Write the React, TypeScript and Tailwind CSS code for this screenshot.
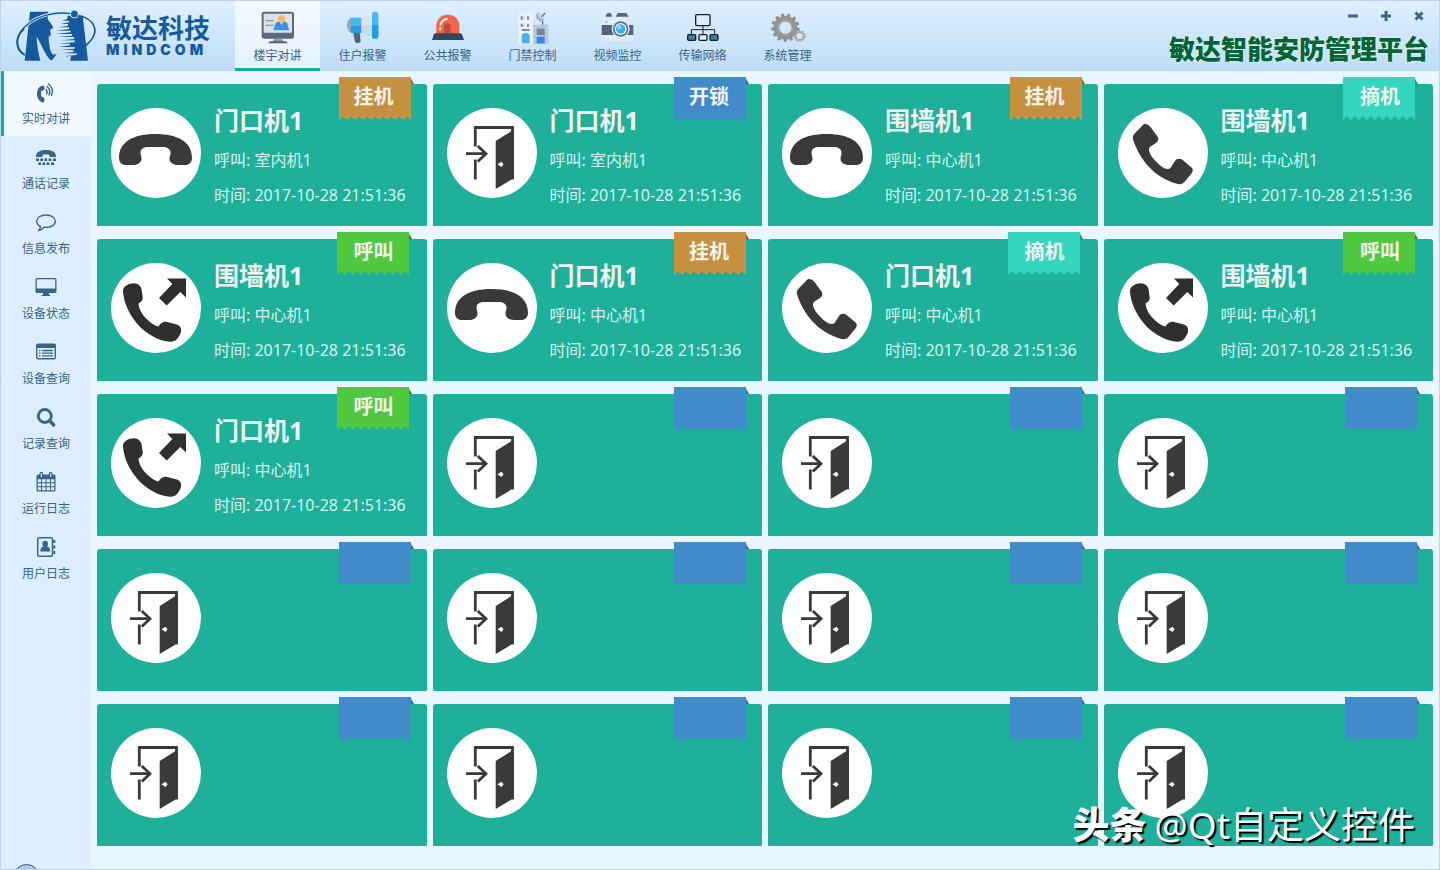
import type { ReactNode } from "react";

type Status = "hangup" | "unlock" | "answer" | "call";

interface Device {
  name?: string;
  peer?: string;
  status: Status;
}

const TIME = "2017-10-28 21:51:36";

const ribbons: Record<Status, { label: string; color: string; fold: string; edge: string; place: string; text: string }> = {
  hangup: { label: "挂机", color: "#c5903f", fold: "#8f6426", edge: "#d9903f", place: "right-[13px]", text: "w-[70px]" },
  unlock: { label: "开锁", color: "#428bca", fold: "#2c6798", edge: "#428bca", place: "right-[13px]", text: "w-[70px]" },
  answer: { label: "摘机", color: "#34d6bf", fold: "#179482", edge: "#34d6bf", place: "right-[15px]", text: "w-[74px]" },
  call: { label: "呼叫", color: "#50c941", fold: "#2b7a52", edge: "#50c941", place: "right-[15px]", text: "w-[74px]" },
};

const devices: Device[] = [
  { name: "门口机1", peer: "室内机1", status: "hangup" },
  { name: "门口机1", peer: "室内机1", status: "unlock" },
  { name: "围墙机1", peer: "中心机1", status: "hangup" },
  { name: "围墙机1", peer: "中心机1", status: "answer" },
  { name: "围墙机1", peer: "中心机1", status: "call" },
  { name: "门口机1", peer: "中心机1", status: "hangup" },
  { name: "门口机1", peer: "中心机1", status: "answer" },
  { name: "围墙机1", peer: "中心机1", status: "call" },
  { name: "门口机1", peer: "中心机1", status: "call" },
  ...Array.from({ length: 11 }, (): Device => ({ status: "unlock" })),
];

const drawings: Record<Status, ReactNode> = {
  hangup: (
    <path
      fill="#3a3a3a"
      d="M8 50C8 34 22 26 44.500 26S81 34 81 50C81 54.500 78 57 74 57H67C62 57 58.500 54.500 58.500 50.500C58.500 48 60 46.500 59.500 44C58.800 40.500 56 39 52 39H37C33 39 30 40.500 29.500 44C29.200 46.500 30.500 48 30.500 50.500C30.500 54.500 27 57 22 57H15C11 57 8 54.500 8 50Z"
    />
  ),
  unlock: (
    <g>
      <path fill="none" stroke="#3a3a3a" strokeWidth="2.800" d="M28.300 38.500V19.500H65.500V71M28.300 51.500V71.500" />
      <path fill="#3a3a3a" d="M48.700 33L66.900 21.500V71.500H64.500L48.700 81Z" />
      <path fill="none" stroke="#3a3a3a" strokeWidth="2.800" d="M19 45.700H38.500M30.800 38L39 45.700L30.800 53.500" />
      <path fill="#fff" d="M50.500 56.300L54.500 53.800L56.500 56.300L54.500 59Z" />
    </g>
  ),
  answer: (
    <path
      fill="#3a3a3a"
      d="M27 16C29 16 31 17 32.500 19L39.800 29C41 31.500 40 33.700 38 35L32.500 38.500C29.500 41 31 46 37.500 53C44 60 49 62.500 52.500 60L57 53C58.500 50.500 61.500 50 64 51.500L73 59C75.300 61 75.300 63 73.500 65.500L66 74.500C64 76.500 61 76.500 58 75.500C36 69 22 52 15.200 32C14.300 29 15 27.500 17 25L24 18C25 16.500 26 16 27 16Z"
    />
  ),
  call: (
    <g fill="#2f2f2f">
      <path d="M19 20.800C25 19 29 21 30.500 26L31.700 34C32 37.500 30 39 27.500 40.500C28 48 33 54 39 59C42 61.500 45 63 47.500 63.500C49 61 51 58.500 55 58.700L66 61.500C70 63 71 67 69.500 70.500C67 75.500 64.500 79 59 78.700C45 77.500 31 68.500 22.500 56C16 46.500 12.500 37.500 12 28C12 24.500 15 22 19 20.800Z" />
      <path d="M56 15.500H75V34.500L69.300 29L55.700 42.500L48 35L61.300 21Z" />
    </g>
  ),
};

function Ribbon({ status, labelled }: { status: Status; labelled: boolean }) {
  const r = ribbons[status];
  return (
    <div className={`absolute -top-[7px] h-[43px] w-[75px] ${r.place}`}>
      <svg className="absolute inset-0" width="75" height="43" viewBox="0 0 75 43" aria-hidden="true">
        <path fill={r.fold} d="M71 0L75 7H71Z" />
        {status === "unlock" ? (
          <path fill={r.color} d="M0 0H72V42H0Z" />
        ) : (
          <g>
            <path
              fill={r.edge}
              d="M0 38H72V43L68 39L64 43L60 39L56 43L52 39L48 43L44 39L40 43L36 39L32 43L28 39L24 43L20 39L16 43L12 39L8 43L4 39L0 43Z"
            />
            <path fill={r.color} d="M0 0H72V39H0Z" />
          </g>
        )}
      </svg>
      {labelled && (
        <span className={`relative block pt-1 text-center text-[20px] leading-8 font-bold text-[#f3f4ee] ${r.text}`}>
          {r.label}
        </span>
      )}
    </div>
  );
}

function DeviceCard({ device }: { device: Device }) {
  return (
    <article className="relative flex h-[142px] items-start gap-[13px] rounded-t-[3px] rounded-b-[1px] bg-[#1eb09b] pt-5 pl-3.5">
      <div className="mt-1 size-[90px] shrink-0 rounded-full bg-white">
        <svg width="90" height="90" viewBox="0 0 90 90" aria-hidden="true">
          {drawings[device.status]}
        </svg>
      </div>
      {device.name && (
        <div className="whitespace-nowrap text-[#d5f5ee]">
          <h2 className="text-[25px] leading-8 font-bold text-[#f0f3ef]">{device.name}</h2>
          <p className="mt-3 text-base leading-6">呼叫: {device.peer}</p>
          <p className="mt-[11px] text-base leading-6">时间: {TIME}</p>
        </div>
      )}
      <Ribbon status={device.status} labelled={Boolean(device.name)} />
    </article>
  );
}

const tabs: { label: string; icon: ReactNode }[] = [
  {
    label: "楼宇对讲",
    icon: (
      <svg width="36" height="36" viewBox="780 28 108 108" aria-hidden="true">
        <rect x="785" y="36" width="97" height="81" rx="8" fill="#5b6877" />
        <rect x="791" y="42" width="85" height="57" rx="2" fill="#dde3ee" />
        <path d="M797 63H821M797 77H821" stroke="#8c95a4" strokeWidth="4" />
        <path d="M821 92V86C825 83 824 66 834 66H856C865 66 862 83 867 87V92Z" fill="#3b8fe6" />
        <path d="M838 64H851L845 76Z" fill="#f6f0e4" />
        <circle cx="845" cy="58" r="11" fill="#fbb85c" />
        <path d="M822 117H846L850 127H818Z" fill="#8b95a3" />
        <path d="M805 131Q806 125 813 125H855Q862 125 863 131Z" fill="#56616f" />
      </svg>
    ),
  },
  {
    label: "住户报警",
    icon: (
      <svg width="36" height="36" viewBox="75 24 108 108" aria-hidden="true">
        <path d="M93 50V96C77 88 77 57 93 50Z" fill="#9aa9ba" />
        <path d="M99 92H119L122 123Q111 130 105 123Z" fill="#51627a" />
        <path d="M124 50L157 39V107L124 96Z" fill="#dbe5ef" />
        <path d="M124 73H157V107L124 96Z" fill="#cbd8e6" />
        <path d="M93 50H124V73H93Z" fill="#43b5f5" />
        <path d="M93 73H124V96H93Z" fill="#249bdf" />
        <rect x="156" y="32" width="19" height="82" rx="9" fill="#46b8f8" />
        <path d="M156 73H175V105Q174 114 165 114T156 105Z" fill="#229bdf" />
      </svg>
    ),
  },
  {
    label: "公共报警",
    icon: (
      <svg width="36" height="36" viewBox="329 24 108 108" aria-hidden="true">
        <path d="M348 100V76C348 54 362 41 382 41S417 54 417 76V100Z" fill="#f2654a" />
        <path d="M371 97V76Q371 67 380 67T391 76V97Z" fill="#bd4c3b" />
        <path d="M360 88V78C360 64 367 55 382 53" fill="none" stroke="#fff0dc" strokeWidth="6" strokeDasharray="9 5 40" />
        <path d="M344 97H420Q425 97 427 105L431 117H335L339 105Q340 97 344 97Z" fill="#34465a" />
      </svg>
    ),
  },
  {
    label: "门禁控制",
    icon: (
      <svg width="36" height="36" viewBox="583 24 108 108" aria-hidden="true">
        <path d="M593 43Q615 24 637 43V129H593Z" fill="#edf3fd" />
        <path d="M637 71H683V129H637Z" fill="#b9c8de" />
        <path d="M603 46V56M603 68V77M622 46V56M622 68V77" stroke="#65768b" strokeWidth="5" />
        <path d="M610 46V56M610 68V77" stroke="#c8d1dd" strokeWidth="4" />
        <path d="M603 87H627" stroke="#65768b" strokeWidth="5" />
        <path d="M603 127V106Q603 96 615 96T627 106V127Z" fill="#46aff5" />
        <path d="M648 83H672V102H648Z" fill="#75859b" />
        <path d="M648 107H672V127H648Z" fill="#3186e8" />
        <ellipse cx="658" cy="49" rx="10" ry="14" fill="#a9b6c6" transform="rotate(-40 658 49)" />
        <ellipse cx="662" cy="45" rx="6" ry="10" fill="#d5deea" transform="rotate(-40 662 45)" />
        <path d="M662 47L674 36M666 60V71" stroke="#64748a" strokeWidth="4" />
      </svg>
    ),
  },
  {
    label: "视频监控",
    icon: (
      <svg width="36" height="36" viewBox="90 20 108 108" aria-hidden="true">
        <rect x="95" y="43" width="95" height="73" rx="9" fill="#dfeafa" />
        <path d="M107 43Q109 31 117 31T126 43ZM137 43L143 32H169L176 43Z" fill="#56687f" />
        <path d="M95 68H190V98H95Z" fill="#53657b" />
        <circle cx="109" cy="59" r="3" fill="#8bc34a" />
        <circle cx="152" cy="80" r="27" fill="#e3eaf4" />
        <circle cx="152" cy="80" r="23" fill="#5e6d80" />
        <circle cx="152" cy="80" r="18" fill="#e9f5fc" />
        <circle cx="152" cy="80" r="14" fill="#35b1f2" />
        <circle cx="148" cy="75" r="6" fill="#8dd8fc" />
      </svg>
    ),
  },
  {
    label: "传输网络",
    icon: (
      <svg width="36" height="36" viewBox="344 24 108 108" aria-hidden="true">
        <path d="M398 74V100M363 100V86H433V100" fill="none" stroke="#17212b" strokeWidth="3" />
        <g stroke="#17212b" strokeWidth="4">
          <rect x="376" y="41" width="43" height="33" rx="4" fill="#dceefd" />
          <rect x="352" y="101" width="24" height="17" rx="3" fill="#3281a2" />
          <rect x="386" y="101" width="24" height="17" rx="3" fill="#dceefd" />
          <rect x="419" y="101" width="24" height="17" rx="3" fill="#3281a2" />
        </g>
      </svg>
    ),
  },
  {
    label: "系统管理",
    icon: (
      <svg width="36" height="36" viewBox="598 24 108 108" aria-hidden="true">
        <circle cx="644" cy="80" r="27" fill="none" stroke="#969696" strokeWidth="18" />
        <circle cx="644" cy="80" r="38" fill="none" stroke="#8d8d8d" strokeWidth="9" strokeDasharray="9 9.370" />
        <circle cx="644" cy="80" r="20" fill="none" stroke="#b9b9b9" strokeWidth="3" />
        <circle cx="687" cy="105" r="12" fill="#d5e6f5" stroke="#ababab" strokeWidth="6" />
        <circle cx="687" cy="105" r="16" fill="none" stroke="#9b9b9b" strokeWidth="4" strokeDasharray="5 5.050" />
      </svg>
    ),
  },
];

const sideItems: { label: string; icon: ReactNode }[] = [
  {
    label: "实时对讲",
    icon: (
      <g>
        <path d="M8.500 4.500C4 5 2 8.500 2 12.500S4 21 8.500 21.800L9.800 18L7.800 15.700L6.600 16C5.800 14 5.800 11.500 6.600 9.500L8 9.800L9.800 7.500Z" fill="currentColor" />
        <path d="M11 8.500Q13 10.500 11.500 13M12 5.500Q16.300 9 14 14M13.500 3Q19.500 8 16.500 14.500" fill="none" stroke="currentColor" strokeWidth="1.400" strokeLinecap="round" />
      </g>
    ),
  },
  {
    label: "通话记录",
    icon: (
      <g fill="currentColor">
        <path d="M1 11C1 6 4.500 4 11 4S21 6 21 11H14.500V8.800Q11 7.800 7.500 8.800V11Z" />
        <path d="M1 12.500H4V15H1ZM5.200 12.500H8V15H5.200ZM9.400 12.500H12.200V15H9.400ZM13.600 12.500H16.400V15H13.600ZM18 12.500H21V15H18ZM3.200 16.500H6V19H3.200ZM7.400 16.500H10.200V19H7.400ZM11.600 16.500H14.400V19H11.600ZM16 16.500H19V19H16Z" />
      </g>
    ),
  },
  {
    label: "信息发布",
    icon: (
      <path d="M11 4C5.500 4 1.700 6.600 1.700 10.200C1.700 12.700 3.500 14.500 5.500 15.500C5.300 17.500 4.500 18.500 3.500 19.500C6 19 7.800 17.700 9 16.300C16 17 20.300 14 20.300 10.200C20.300 6.600 16.500 4 11 4Z" fill="none" stroke="currentColor" strokeWidth="1.400" strokeLinejoin="round" />
    ),
  },
  {
    label: "设备状态",
    icon: (
      <path fillRule="evenodd" d="M2 2H20Q21.500 2 21.500 3.500V15.500Q21.500 17 20 17H14V18.500L16 20H6L8 18.500V17H2Q.5 17 .5 15.500V3.500Q.5 2 2 2ZM1.800 3.300V12.500H20.200V3.300Z" fill="currentColor" />
    ),
  },
  {
    label: "设备查询",
    icon: (
      <g>
        <rect x="1.700" y="3.200" width="18.600" height="14.600" rx="1.500" fill="none" stroke="currentColor" strokeWidth="1.400" />
        <path d="M1.500 3H20.500V7H1.500Z" fill="currentColor" />
        <path d="M4 9.500H5.500M7 9.500H18M4 12.200H5.500M7 12.200H18M4 14.900H5.500M7 14.900H18" stroke="currentColor" strokeWidth="1.300" />
      </g>
    ),
  },
  {
    label: "记录查询",
    icon: (
      <g fill="none" stroke="currentColor">
        <circle cx="9.800" cy="10" r="6.500" strokeWidth="2.800" />
        <path d="M14.500 14.800L18.700 19" strokeWidth="3.400" strokeLinecap="round" />
      </g>
    ),
  },
  {
    label: "运行日志",
    icon: (
      <g>
        <path fillRule="evenodd" fill="currentColor" d="M3 3.500H19Q20.500 3.500 20.500 5V19Q20.500 20.500 19 20.500H3Q1.500 20.500 1.500 19V5Q1.500 3.500 3 3.500ZM2.800 8.300V11.300H6V8.300ZM7 8.300V11.300H10.500V8.300ZM11.500 8.300V11.300H15V8.300ZM16 8.300V11.300H19.200V8.300ZM2.800 12.300V15.300H6V12.300ZM7 12.300V15.300H10.500V12.300ZM11.500 12.300V15.300H15V12.300ZM16 12.300V15.300H19.200V12.300ZM2.800 16.300V19.300H6V16.300ZM7 16.300V19.300H10.500V16.300ZM11.500 16.300V19.300H15V16.300ZM16 16.300V19.300H19.200V16.300Z" />
        <path d="M6.300 2.500V5.500M15.700 2.500V5.500" stroke="currentColor" strokeWidth="3.600" strokeLinecap="round" />
        <path d="M6.300 2.500V5.500M15.700 2.500V5.500" stroke="#dceeff" strokeWidth="1.200" strokeLinecap="round" />
      </g>
    ),
  },
  {
    label: "用户日志",
    icon: (
      <g>
        <rect x="2.700" y="1.700" width="14.800" height="18.600" rx="1.500" fill="none" stroke="currentColor" strokeWidth="1.500" />
        <path d="M18.300 4H20.300V7H18.300ZM18.300 9.500H20.300V12.500H18.300ZM18.300 15H20.300V18H18.300Z" fill="currentColor" />
        <ellipse cx="10.200" cy="8" rx="2.800" ry="3.300" fill="currentColor" />
        <path d="M5.300 15.500C5.300 12.500 6.500 10.800 8.300 10.600Q10.200 12 12.100 10.600C14 10.800 15.200 12.500 15.200 15.500Z" fill="currentColor" />
      </g>
    ),
  },
];

function Logo() {
  return (
    <div className="flex w-[234px] shrink-0 items-center gap-2 pl-3.5 text-[#15599f]">
      <svg className="shrink-0" width="83" height="56" viewBox="43 25 249 168" aria-hidden="true">
        <g fill="currentColor">
          <path d="M88 36H143L141 58L158 83L148 92L151 105L144 112C144 130 148 158 157 165L168 163L154 182C142 182 124 140 108 110C108 135 113 160 119 183H72Z" />
          <path d="M200 48H246L262 183H208L212 170H190L228 166V161H186L218 157V151H180L222 147V142H176L208 137V132H174L222 128V122H184L220 118V112H172L214 108V103H165L210 98V93H168L205 88V83H174L202 78V73H180L205 68V63H184L200 58Z" />
        </g>
        <path d="M72 166C42 145 42 108 76 78C112 46 165 35 211 42" fill="none" stroke="#d2e7fa" strokeWidth="9" />
        <path d="M72 166C42 145 42 108 76 78C112 46 165 35 211 42" fill="none" stroke="currentColor" strokeWidth="4" />
        <path d="M72 166C43 149 42 112 70 87" fill="none" stroke="currentColor" strokeWidth="6" />
        <path d="M228 46C278 55 308 94 254 139" fill="none" stroke="currentColor" strokeWidth="5" />
        <circle cx="221" cy="43" r="12" fill="currentColor" stroke="#d2e7fa" strokeWidth="3" />
      </svg>
      <div className="whitespace-nowrap">
        <div className="text-[26px] leading-7 font-bold">敏达科技</div>
        <div className="font-[Inter,sans-serif] text-[14px] leading-4 font-black tracking-[4px]">MINDCOM</div>
      </div>
    </div>
  );
}

export default function App() {
  return (
    <div className="relative flex min-h-screen flex-col overflow-hidden border border-[#bbd3eb] bg-[#e9f6ff] font-['Noto_Sans','Noto_Sans_CJK_SC',sans-serif]">
      <header className="flex h-[70px] bg-linear-to-b from-[#def0ff] to-[#bfddf6]">
        <Logo />
        <nav className="flex" aria-label="主菜单">
          {tabs.map((tab, i) => (
            <button
              key={tab.label}
              type="button"
              className={`flex w-[85px] flex-col items-center gap-px border-b-3 pt-2 text-xs leading-5 text-[#386487] ${
                i === 0 ? "border-[#12b196] bg-linear-to-b from-[#f3f9ff] to-[#e4f2ff]" : "border-transparent"
              }`}
            >
              {tab.icon}
              <span>{tab.label}</span>
            </button>
          ))}
        </nav>
        <div className="ml-auto flex flex-col items-end pr-2.5">
          <div className="flex gap-[13px] pt-[5px] text-[#3a668c]">
            <button type="button" aria-label="最小化" className="flex size-5 items-center justify-center">
              <svg width="10" height="10" viewBox="0 0 10 10"><path d="M0 5H10" stroke="currentColor" strokeWidth="3" /></svg>
            </button>
            <button type="button" aria-label="最大化" className="flex size-5 items-center justify-center">
              <svg width="10" height="10" viewBox="0 0 10 10"><path d="M0 5H10M5 0V10" stroke="currentColor" strokeWidth="3" /></svg>
            </button>
            <button type="button" aria-label="关闭" className="flex size-5 items-center justify-center">
              <svg width="10" height="10" viewBox="0 0 10 10"><path d="M1.500 1.500L8.500 8.500M8.500 1.500L1.500 8.500" stroke="currentColor" strokeWidth="3" /></svg>
            </button>
          </div>
          <h1 className="mt-[7px] text-[26px] leading-8 font-black whitespace-nowrap text-[#006534] [text-shadow:0_0_2px_#ffffff]">
            敏达智能安防管理平台
          </h1>
        </div>
      </header>

      <div className="flex flex-1">
        <nav className="relative w-[90px] shrink-0 overflow-hidden bg-[#dceeff]" aria-label="对讲菜单">
          {sideItems.map((item, i) => (
            <button
              key={item.label}
              type="button"
              className={`flex h-[65px] w-full flex-col items-center gap-1.5 border-l-3 pt-2.5 pr-[3px] text-xs leading-5 text-[#386487] ${
                i === 0 ? "border-[#12b196] bg-[#f1f9ff]" : "border-transparent"
              }`}
            >
              <svg width="22" height="22" viewBox="0 0 22 22" aria-hidden="true">
                {item.icon}
              </svg>
              <span>{item.label}</span>
            </button>
          ))}
          <div className="absolute -bottom-[22px] left-3 size-[27px] rounded-full border border-[#3a5a80] bg-[#b5c8dd]" />
        </nav>
        <main className="grid flex-1 grid-cols-4 content-start gap-x-1.5 gap-y-[13px] px-1.5 pt-[13px]">
          {devices.map((device, i) => (
            <DeviceCard key={i} device={device} />
          ))}
        </main>
      </div>

      <div className="pointer-events-none absolute right-6 bottom-5 flex items-center gap-2 text-[37px] leading-[48px] whitespace-nowrap text-white [text-shadow:2px_2px_1px_#000000]">
        <span className="font-black">头条</span>
        <span>@Qt自定义控件</span>
      </div>
    </div>
  );
}
